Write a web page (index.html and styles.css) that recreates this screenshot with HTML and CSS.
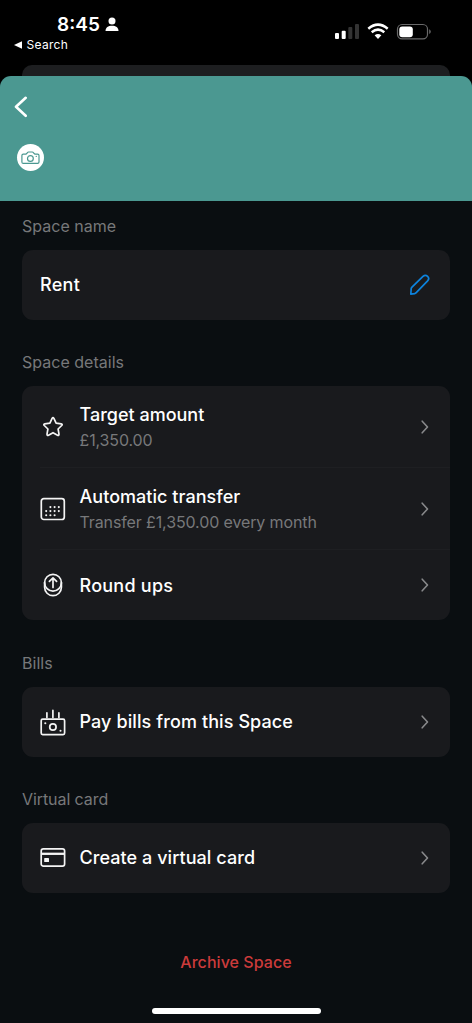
FILE: index.html
```html
<!DOCTYPE html>
<html lang="en">
<head>
<meta charset="utf-8">
<title>Space settings</title>
<link rel="stylesheet" href="styles.css">
</head>
<body>
<div class="status">
  <div class="status-left">
    <div class="clock"><span class="time">8:45</span>
      <svg class="person" width="14" height="15" viewBox="0 0 14 15"><circle cx="7" cy="4" r="3.5"/><path d="M.5 14C.5 10.5 3.2 8.7 7 8.7s6.5 1.8 6.5 5.3z"/></svg>
    </div>
    <div class="return"><svg width="9" height="8" viewBox="0 0 9 8"><path d="M0 4L8 .2v7.6z"/></svg><span>Search</span></div>
  </div>
  <svg class="indicators" width="98" height="18" viewBox="0 0 98 18">
    <rect x="0" y="10" width="4" height="6" rx="1"/><rect x="6.7" y="7.7" width="4" height="8.3" rx="1"/>
    <g class="dim"><rect x="13.3" y="4" width="4" height="12" rx="1"/><rect x="20" y="1" width="4" height="15" rx="1"/></g>
    <g class="waves"><path d="M33.3 5.7Q43 -2.5 52.7 5.7"/><path d="M36.7 9.2Q43 4 49.3 9.2"/></g>
    <path d="M39.6 12.3Q43 9.6 46.4 12.3L43 16z"/>
    <rect class="shell" x="62.5" y="1.5" width="30" height="14.4" rx="4.6"/>
    <rect x="64.3" y="3.4" width="13.5" height="10.8" rx="3"/>
    <path class="nub" d="M94.2 6.3q1.6.9 1.6 2.4t-1.6 2.4z"/>
  </svg>
</div>
<div class="behind"></div>
<main class="sheet">
  <header class="banner">
    <svg class="back" width="16" height="22" viewBox="0 0 16 22"><path d="M12.7 1.8L3 10.8l9.7 9"/></svg>
    <div class="photo"><svg width="19" height="14" viewBox="0 0 19 14"><path d="M2.3 3.1H4.7C6 3 6.2 1 7.6 1H11.2C12.7 1 12.8 3 14.2 3.1H16.6Q18 3.1 18 4.5V11Q18 12.4 16.6 12.4H2.3Q.9 12.4.9 11V4.5Q.9 3.1 2.3 3.1z"/><circle cx="9.4" cy="7.5" r="2.9"/><path d="M15.2 5.4h.1"/></svg></div>
  </header>
  <section class="group first">
    <h2 class="label name-label">Space name</h2>
    <div class="card"><div class="row">
      <span class="title rent">Rent</span>
      <svg class="pencil" width="22" height="22" viewBox="0 0 22 22"><path d="M1.8 20.2L2.2 14.5Q2.4 13.8 3 13.2L14 2.4C15.4 1.1 17.3 1.1 18.6 2.3 19.9 3.6 19.9 5.5 18.6 6.9L8.2 17.6Q6.7 19.3 5.6 19.6z"/></svg>
    </div></div>
  </section>
  <section class="group">
    <h2 class="label">Space details</h2>
    <div class="card">
      <div class="row tall">
        <svg class="icon" width="26" height="26" viewBox="0 0 26 26"><path d="M12.1 4.4Q13 2.8 13.9 4.4L16.1 9.1 21.2 9.8Q22.9 10.2 21.7 11.5L18.1 15 19 20.1Q19 21.9 17.5 21.2L13 18.7 8.5 21.2Q7 21.9 7 20.1L7.9 15 4.3 11.5Q3.1 10.2 4.8 9.8L9.9 9.1z"/></svg>
        <div class="text"><span class="title target">Target amount</span><span class="sub amount">£1,350.00</span></div>
        <svg class="chevron" width="8" height="14" viewBox="0 0 8 14"><path d="M1.2 1.2L6.5 7l-5.3 5.8"/></svg>
      </div>
      <div class="row tall ruled">
        <svg class="icon" width="26" height="26" viewBox="0 0 26 26"><rect x="1.3" y="2.7" width="23" height="20.8" rx="2.5"/><path class="dots" d="M10.4 11.1h.01M14.6 11.1h.01M18.8 11.1h.01M6.2 15.1h.01M10.4 15.1h.01M14.6 15.1h.01M18.8 15.1h.01M6.2 19.2h.01M10.4 19.2h.01M14.6 19.2h.01"/></svg>
        <div class="text"><span class="title auto">Automatic transfer</span><span class="sub transfer">Transfer £1,350.00 every month</span></div>
        <svg class="chevron" width="8" height="14" viewBox="0 0 8 14"><path d="M1.2 1.2L6.5 7l-5.3 5.8"/></svg>
      </div>
      <div class="row ruled">
        <svg class="icon" width="26" height="26" viewBox="0 0 26 26"><circle cx="13" cy="10.7" r="8.4"/><path d="M4.6 10.7V15.3A8.4 8.4 0 0 0 21.4 15.3V10.7M13 15.4V6M9.4 9.4L13 5.8l3.6 3.6"/></svg>
        <span class="title round">Round ups</span>
        <svg class="chevron" width="8" height="14" viewBox="0 0 8 14"><path d="M1.2 1.2L6.5 7l-5.3 5.8"/></svg>
      </div>
    </div>
  </section>
  <section class="group">
    <h2 class="label bills">Bills</h2>
    <div class="card"><div class="row">
      <svg class="icon" width="26" height="28" viewBox="0 0 26 28"><rect x="1.2" y="11.2" width="23.4" height="15.4" rx="1.5"/><circle cx="12.9" cy="19" r="3.2"/><path d="M6.9 4.8v4.7M12.9 2.4v7.1M18.9 4.8v4.7"/><path class="dots" d="M5.3 15.2h.01M20.5 22.7h.01"/></svg>
      <span class="title pay">Pay bills from this Space</span>
      <svg class="chevron" width="8" height="14" viewBox="0 0 8 14"><path d="M1.2 1.2L6.5 7l-5.3 5.8"/></svg>
    </div></div>
  </section>
  <section class="group">
    <h2 class="label virtual">Virtual card</h2>
    <div class="card"><div class="row">
      <svg class="icon" width="26" height="26" viewBox="0 0 26 26"><rect x="1.2" y="3.9" width="23.4" height="17.2" rx="2.2"/><path class="stripe" d="M1.2 8.8h23.4"/><rect class="solid" x="4.2" y="13" width="4.8" height="4" rx=".6"/></svg>
      <span class="title create">Create a virtual card</span>
      <svg class="chevron" width="8" height="14" viewBox="0 0 8 14"><path d="M1.2 1.2L6.5 7l-5.3 5.8"/></svg>
    </div></div>
  </section>
  <div class="archive">Archive Space</div>
  <div class="home"></div>
</main>
</body>
</html>
```
FILE: styles.css
```css
* { box-sizing: border-box; }
body { margin: 0; width: 472px; height: 1023px; overflow: hidden; background: #000; color: #fff; font-family: Inter, "Liberation Sans", sans-serif; display: flex; flex-direction: column; }
svg { display: block; flex: none; }
.status { height: 65px; flex: none; display: flex; justify-content: space-between; padding: 13px 39px 0 14px; fill: #fff; }
.clock { display: flex; align-items: center; gap: 5px; height: 22px; padding-left: 43px; }
.time { font-size: 19px; font-weight: 600; letter-spacing: 0; }
.return { display: flex; align-items: center; gap: 3.5px; height: 19px; font-size: 12px; font-weight: 400; letter-spacing: .3px; }
.indicators { margin: 10px 0 0; }
.dim { fill: #333; }
.waves { fill: none; stroke: #fff; stroke-width: 2.5; }
.shell { fill: none; stroke: #69696a; stroke-width: 1.2; }
.nub { fill: #69696a; }
.behind { height: 11px; flex: none; margin: 0 22px; border-radius: 10px 10px 0 0; background: #1d1e20; }
.sheet { height: 947px; flex: none; background: #0a0e11; border-radius: 11px 11px 0 0; overflow: hidden; display: flex; flex-direction: column; }
.banner { height: 125px; flex: none; background: #4b9891; padding: 20px 14px 0 13px; display: flex; flex-direction: column; gap: 26px; }
.back { fill: none; stroke: #fff; stroke-width: 2.6; stroke-linecap: round; stroke-linejoin: round; }
.photo { width: 27px; height: 27px; margin-left: 4px; border-radius: 50%; background: #fff; display: flex; align-items: center; justify-content: center; }
.photo svg { fill: none; stroke: #4b9891; stroke-width: 1.2; stroke-linecap: round; stroke-linejoin: round; }
.group { flex: none; margin: 18.4px 22px 0; }
.group.first { margin-top: .8px; }
.label { margin: 0; height: 48px; line-height: 48px; font-size: 16px; font-weight: 400; letter-spacing: .02px; color: #77787a; }
.label.virtual { letter-spacing: -.08px; }
.card { background: #191a1d; border-radius: 11px; }
.row { height: 70px; display: flex; align-items: center; padding: 0 21px 0 18px; position: relative; }
.row.tall { height: 82px; }
.ruled::before { content: ""; position: absolute; left: 18px; right: 0; top: -1px; height: 1px; background: #1e1f22; }
.icon { margin-right: 13.5px; fill: none; stroke: #f4f4f4; stroke-width: 1.7; stroke-linecap: round; stroke-linejoin: round; }
.icon .dots { stroke-width: 2.1; }
.icon .stripe { stroke-width: 2.3; stroke-linecap: butt; }
.icon .solid { fill: #f4f4f4; stroke: none; }
.text { display: flex; flex-direction: column; }
.title { font-size: 18px; line-height: 27px; font-weight: 500; white-space: nowrap; }
.text .title { line-height: 26px; }
.title.rent { letter-spacing: .3px; }
.title.auto { letter-spacing: .04px; }
.title.round { letter-spacing: .25px; }
.title.pay { letter-spacing: .1px; }
.title.create { letter-spacing: .06px; }
.sub { font-size: 16px; line-height: 24px; font-weight: 400; letter-spacing: -.12px; color: #77787a; white-space: nowrap; }
.chevron { margin-left: auto; fill: none; stroke: #88898b; stroke-width: 1.6; stroke-linecap: round; stroke-linejoin: round; }
.pencil { margin-left: auto; margin-right: -2px; fill: none; stroke: #0d83dd; stroke-width: 1.7; stroke-linejoin: round; }
.archive { margin-top: 54px; height: 30px; line-height: 30px; text-align: center; color: #cc3b3b; font-size: 16px; font-weight: 500; letter-spacing: .05px; }
.home { width: 169px; height: 6px; border-radius: 3px; background: #fff; margin: 31.5px auto 0; flex: none; }
```
